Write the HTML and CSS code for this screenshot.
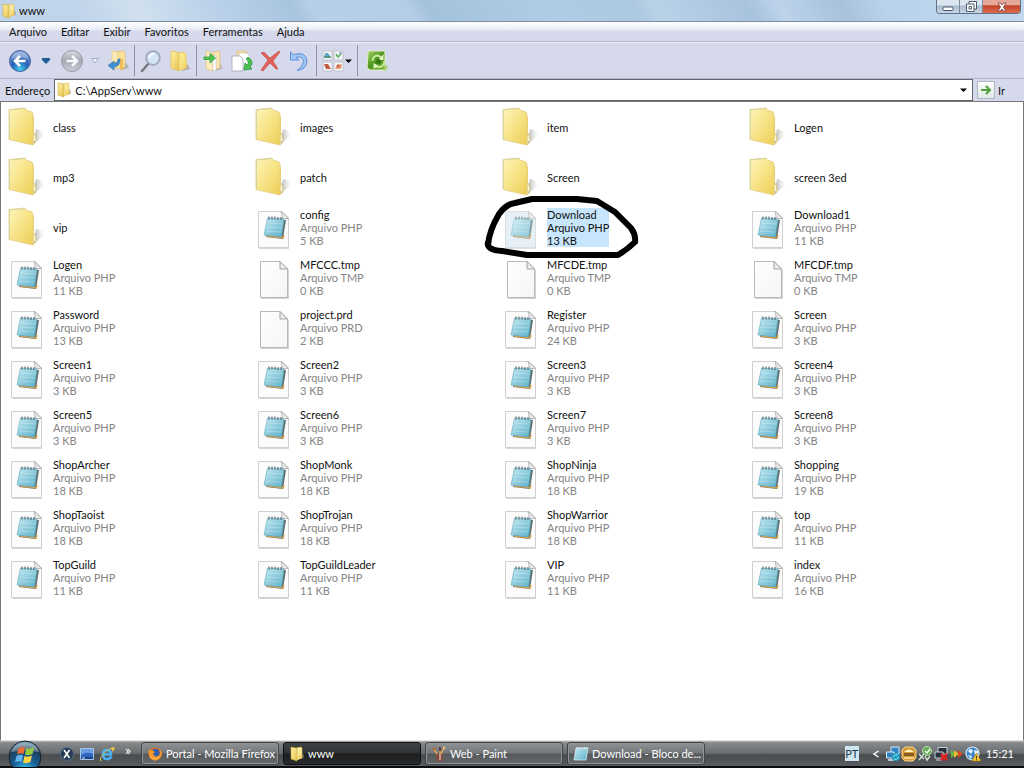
FILE: index.html
```html
<!DOCTYPE html>
<html lang="pt">
<head>
<meta charset="utf-8">
<title>www</title>
<link rel="stylesheet" href="styles.css">
</head>
<body>
<svg class="sprite" aria-hidden="true">
  <defs>
    <linearGradient id="gFolder" x1="0" y1="0" x2="1" y2="1"><stop offset="0" stop-color="#fdf5ba"/><stop offset=".5" stop-color="#f7e387"/><stop offset="1" stop-color="#edce55"/></linearGradient>
    <linearGradient id="gShade" x1="0" y1="0" x2="1" y2="0"><stop offset="0" stop-color="#a4a49e"/><stop offset="1" stop-color="#eee" stop-opacity=".2"/></linearGradient>
    <linearGradient id="gPad" x1="0" y1="0" x2="1" y2="1"><stop offset="0" stop-color="#c2e9f1"/><stop offset="1" stop-color="#5cb0c9"/></linearGradient>
    <linearGradient id="gPage" x1="0" y1="0" x2="1" y2="1"><stop offset="0" stop-color="#fff"/><stop offset="1" stop-color="#f5f5f5"/></linearGradient>
    <linearGradient id="gSmall" x1="0" y1="0" x2="1" y2="1"><stop offset="0" stop-color="#fff4a8"/><stop offset="1" stop-color="#e6c04c"/></linearGradient>
    <radialGradient id="gBack" cx=".5" cy=".9" r=".9"><stop offset="0" stop-color="#4ad0f4"/><stop offset=".45" stop-color="#2560b4"/><stop offset="1" stop-color="#8fa9dc"/></radialGradient>
    <linearGradient id="gFwd" x1="0" y1="0" x2="0" y2="1"><stop offset="0" stop-color="#d8dbe4"/><stop offset=".5" stop-color="#a4a8b2"/><stop offset="1" stop-color="#cdd0d8"/></linearGradient>
    <radialGradient id="gOrb" cx=".5" cy=".95" r=".95"><stop offset="0" stop-color="#3fd7ff"/><stop offset=".4" stop-color="#17639a"/><stop offset=".75" stop-color="#1d3f5c"/><stop offset="1" stop-color="#8fb0c4"/></radialGradient>
    <linearGradient id="gGreen" x1="0" y1="0" x2="1" y2="1"><stop offset="0" stop-color="#a8d46a"/><stop offset=".5" stop-color="#4b941c"/><stop offset="1" stop-color="#7dbb3c"/></linearGradient>
  </defs>

  <symbol id="folder" viewBox="0 0 40 44">
    <path d="M25 39 L36 31 Q35 25 28 24Z" fill="url(#gShade)"/>
    <path d="M24 10 26 12V38L24 40Z" fill="#ecd069"/>
    <path d="M26 28Q28 31 28 37L25 40V30Z" fill="#fdf6d8" stroke="#dcbd5c" stroke-width=".7"/>
    <path d="M1 4.500 17 3 18 5 24 7 25 9V40L1 34.500Z" fill="url(#gFolder)" stroke="#e3cd80" stroke-width=".8"/>
    <path d="M1.500 34V5L17 3.500" fill="none" stroke="#cbd4a4" stroke-width=".8"/>
    <circle cx="26.500" cy="37" r=".8" fill="#7f9fa8"/>
  </symbol>

  <symbol id="php" viewBox="0 -2 40 44">
    <path d="M4 5H28L34 11V42H4Z" fill="#bdbdbd" opacity=".6"/>
    <path class="sheet" d="M3.500 4.500H27L33.500 11V40.500H3.500Z" stroke="#d0d0d0"/>
    <path d="M26 4 33.500 11.500H27.500Z" fill="#e9e9e9" stroke="#a9a9a9" stroke-width=".8"/>
    <path d="M14 12 31 13 28 32 11 30Z" fill="#5f6e70"/>
    <path d="M12 29 28 31 29 28" fill="none" stroke="#dba04a" stroke-width="1.500"/>
    <path d="M12.500 11 29 12 26.500 30 9 28Z" fill="url(#gPad)" stroke="#5fa9bd" stroke-width=".6"/>
    <path d="M12 16 28 17M11 20 27 21M11 24 26 25" stroke="#fff" stroke-width=".5" opacity=".5"/>
    <path d="M14 9.500V12.500M17 9.500V12.500M20 9.500V12.500M23 10V13M26 10V13" stroke="#47565c" stroke-width="1"/>
  </symbol>

  <symbol id="blank" viewBox="0 -2 40 44">
    <path d="M6 6H26L34 13V42H6Z" fill="#aaa" opacity=".5"/>
    <path d="M5.500 4.500H25L32.500 12V40.500H5.500Z" fill="url(#gPage)" stroke="#b9b9b9"/>
    <path d="M25 4.500V12H32.500Z" fill="#eee" stroke="#9c9c9c" stroke-width=".9"/>
  </symbol>

  <symbol id="small-folder" viewBox="0 0 16 16">
    <path d="M8 14 15 12V9L11 4Z" fill="#9b9780" opacity=".5"/>
    <path d="M7 2 12 1 13 2V12L7 14Z" fill="#f9eb9b" stroke="#d3b14c" stroke-width=".6"/>
    <path d="M2 1 7 2 8 4V15L2 13Z" fill="url(#gSmall)" stroke="#cba63c" stroke-width=".6"/>
    <path d="M10 6 13 8V12L8 14Z" fill="url(#gSmall)"/>
  </symbol>

  <symbol id="i-back" viewBox="0 0 24 24">
    <circle cx="12" cy="12" r="10.500" fill="url(#gBack)" stroke="#4866a4"/>
    <path d="M3.500 10Q5 3 12 3T20.500 10Q12 7 3.500 10Z" fill="#fff" opacity=".3"/>
    <path d="M17.500 12H8M12 7 7 12 12 17" fill="none" stroke="#fff" stroke-width="2.600"/>
  </symbol>
  <symbol id="i-forward" viewBox="0 0 24 24">
    <circle cx="12" cy="12" r="10.500" fill="url(#gFwd)" stroke="#9699a4"/>
    <path d="M6.500 12H16M12 7 17 12 12 17" fill="none" stroke="#f6f7fa" stroke-width="2.600"/>
  </symbol>
  <symbol id="i-up" viewBox="0 0 24 24">
    <path d="M14 21 23 19 18 11Z" fill="#8f8c7d" opacity=".5"/>
    <path d="M9 3 17 2 19 4V18L9 20Z" fill="#fbdf9a" stroke="#e4bd6a" stroke-width=".7"/>
    <path d="M6 2 11 3 12 5V13H6Z" fill="#fceab5" stroke="#e6c676" stroke-width=".6"/>
    <path d="M14 9 17 10V22L14 20Z" fill="#f1bd58"/>
    <path d="M12 10Q12 14 8 14.500V12L2 16.500 8 21V18Q14.500 17.500 14 10Z" fill="#3f8fd4" stroke="#2a6ba9" stroke-width=".5"/>
  </symbol>
  <symbol id="i-search" viewBox="0 0 24 24">
    <path d="M9.500 14.500 3 22" stroke="#77767c" stroke-width="2.400" stroke-linecap="round"/>
    <circle cx="14" cy="9" r="6.800" fill="#d2e6f7" stroke="#a0a9ba" stroke-width="1.800"/>
    <path d="M10 9Q11 5 15 5" fill="none" stroke="#fff" stroke-width="1.500"/>
  </symbol>
  <symbol id="i-folders" viewBox="0 0 24 24">
    <path d="M13 22 22 20 17 11Z" fill="#8f8c7d" opacity=".6"/>
    <path d="M10 4 16 3 18 5V18L10 21Z" fill="#fae488" stroke="#e0bc4f" stroke-width=".7"/>
    <path d="M3 2 9 3 11 6V22L3 19Z" fill="url(#gSmall)" stroke="#e0bc4f" stroke-width=".7"/>
    <path d="M14 9 19 11V19L12 22Z" fill="url(#gSmall)"/>
  </symbol>
  <symbol id="i-move" viewBox="0 0 24 24">
    <path d="M14 22 22 20 18 12Z" fill="#8f8c7d" opacity=".4"/>
    <path d="M12 3 18 2 19 4V19L12 21Z" fill="#f9e3b0" stroke="#d9b976" stroke-width=".7"/>
    <path d="M5 2 10 3 12 5V22L5 20Z" fill="#fbedbf" stroke="#dfc07b" stroke-width=".7"/>
    <path d="M12 7 15 6V21L12 22Z" fill="#fff" stroke="#bbb" stroke-width=".5"/>
    <path d="M3 8H9V4.500L14.500 9 9 14V10.500H3Z" fill="#50c850" stroke="#259437" stroke-width=".7"/>
  </symbol>
  <symbol id="i-copy" viewBox="0 0 24 24">
    <path d="M7 2 16 2 18 5V18H7Z" fill="#fbe7ac" stroke="#dbbb70" stroke-width=".7"/>
    <path d="M9 4H17L20 7V18H9Z" fill="#fff" stroke="#b8b8bc" stroke-width=".7"/>
    <path d="M2 7H10L13 10V22H2Z" fill="#fff" stroke="#a2a4ad" stroke-width=".8"/>
    <path d="M18 8Q25 13 20 18L22 20 14 21 15 14 17 16Q20 13 16 10Z" fill="#4abf50" stroke="#248f38" stroke-width=".7"/>
  </symbol>
  <symbol id="i-delete" viewBox="0 0 24 24">
    <path d="M2 4 5 3 11 9 20 2 21 3 14 12 19 20 17 20 11 14 4 22 2 21 9 11Z" fill="#e0625a" stroke="#c24440" stroke-width=".6"/>
  </symbol>
  <symbol id="i-undo" viewBox="0 0 24 24">
    <path d="M2.500 3V11H11L8 8.500Q15 6.500 15.500 12.500 15 18 9 21.500 18 21 19 12 18 2 5.500 5.500Z" fill="#a3c6f5" stroke="#5c8edb" stroke-width="1"/>
  </symbol>
  <symbol id="i-views" viewBox="0 0 24 24">
    <path d="M2 2H11V11H2ZM13 2H22V11H13ZM2 13H11V22H2ZM13 13H22V22H13Z" fill="#f5f6f9" stroke="#b7bac4" stroke-width=".8"/>
    <path d="M4 4H7L9 7V9H3Z" fill="#5fa8cc"/><path d="M3 8H10" stroke="#42884a" stroke-width="1.200"/>
    <path d="M15 5 17 8 20 5" fill="none" stroke="#5fae64" stroke-width="1.600"/><path d="M18 4H21" stroke="#4a7fb8"/>
    <path d="M3 15H7L10 20H5Z" fill="#c35a42"/><path d="M14 20Q17 13 21 16L20 20Z" fill="#e6a07a"/><circle cx="17" cy="17" r="1.500" fill="#c96445"/>
  </symbol>
  <symbol id="i-sync" viewBox="0 0 24 24">
    <path d="M3 2H20V16L21 21H5L2 19Z" fill="url(#gGreen)" stroke="#dcebc4" stroke-width="1.200"/>
    <path d="M7.500 12Q8 6.500 13 6.500L17 9M19.500 12Q19 17 15 18L10 17.500" fill="none" stroke="#c8e89d" stroke-width="2"/>
    <path d="M18.500 5V11H13ZM8.500 20V14L13 16.500Z" fill="#e2f4c6"/>
    <circle cx="13.500" cy="12.500" r="2.500" fill="#347713"/>
    <path d="M18 16 23 17 20 23Z" fill="#a7d16b"/>
  </symbol>

  <symbol id="caret" viewBox="0 0 8 8"><path d="M0 2.500H7L3.500 6Z" fill="currentColor"/></symbol>
  <symbol id="caret-deep" viewBox="0 0 10 8"><path d="M1 1H9V3L5 7 1 3Z" fill="currentColor"/></symbol>
  <symbol id="caret-open" viewBox="0 0 10 8"><path d="M1.500 1.500H8.500L5 6Z" fill="#eef1f9" stroke="#a0acd0"/></symbol>
  <symbol id="go" viewBox="0 0 16 16">
    <path d="M3 8H12M8 4 12 8 8 12" fill="none" stroke="#4aa23a" stroke-width="2"/>
  </symbol>

  <symbol id="orb" viewBox="0 0 34 34">
    <circle cx="17" cy="17" r="16" fill="url(#gOrb)" stroke="#17242c"/>
    <path d="M3 12Q6 3 17 3T31 12Q17 9 3 12Z" fill="#fff" opacity=".3"/>
    <path d="M10.500 8.500Q13.500 6 17 7.500L15.500 14Q12.500 12.500 9 14.500Z" fill="#ef6b32"/>
    <path d="M18.500 8Q22 9.500 26 7.500L24.500 14Q20.500 16 17 14.500Z" fill="#93cb3d"/>
    <path d="M8.500 16Q12 14 15 15.500L13.500 22Q10.500 20.500 7 22.500Z" fill="#64b4f0"/>
    <path d="M16.500 16Q20.500 17.500 24 15.500L22.500 22Q18.500 24 15 22.500Z" fill="#fdd245"/>
  </symbol>
  <symbol id="ql-x" viewBox="0 0 16 16">
    <circle cx="8" cy="8" r="6.500" fill="#263a54" stroke="#536d8b"/>
    <path d="M5 4 10.500 12M10.500 4 5 12" stroke="#fff" stroke-width="1.600"/>
  </symbol>
  <symbol id="ql-desk" viewBox="0 0 16 16">
    <path d="M1.500 2.500H14.500V13.500H1.500Z" fill="#2f65be" stroke="#a7c4eb"/>
    <path d="M2 9Q8 5 14 8V3H2Z" fill="#6a9ce0"/><path d="M2 12H14" stroke="#1c4283" stroke-width="2"/><path d="M3 12H6" stroke="#d1e4ff"/>
  </symbol>
  <symbol id="ql-ie" viewBox="0 0 16 16">
    <path d="M12.500 10.500Q11 13 8 13 4 13 4 8.500 4 4 8 4 12 4 12 8.500H5" fill="none" stroke="#4cb2ee" stroke-width="2.500"/>
    <path d="M1 15Q0 12 5 7T15 1Q17 3 13 6 14 3 12 3 8 4 4 9T3 14Z" fill="#f3c744"/>
  </symbol>
  <symbol id="firefox" viewBox="0 0 16 16">
    <circle cx="8" cy="8" r="6.500" fill="#e36b1d"/><circle cx="8.500" cy="7" r="4.200" fill="#2f5fb0"/>
    <path d="M1.500 3Q3 5 5 4L8 6 6 8Q8 12 12 9.500 14 7 12 3 16 6 14.500 10 12 15 7 14.500 1 13 1.500 3Z" fill="#f3952c"/>
    <path d="M3 10Q7 15 12 11" stroke="#fcd257" fill="none"/>
  </symbol>
  <symbol id="paint" viewBox="0 0 16 16">
    <path d="M5 8H12L11 15H6Z" fill="#8a4a3a"/><path d="M6 8 3 3M9 8V3M10 8 13 2" stroke="#dda056" stroke-width="1.500"/>
    <path d="M1 4 3 1 5 4Z" fill="#b46a2d"/><path d="M8 1H10V5H8Z" fill="#5d4040"/><path d="M12 0 15 2 12 4Z" fill="#eec36c"/><path d="M9 8V14" stroke="#eee"/>
  </symbol>
  <symbol id="notepad" viewBox="0 0 16 16">
    <path d="M3 2H15L13 14H1Z" fill="url(#gPad)" stroke="#e1f3f6" stroke-width=".7"/>
    <path d="M4 1V3M6.500 1V3M9 1V3M11.500 1V3M14 1V3" stroke="#dfe8ea"/>
  </symbol>
  <symbol id="t-sync" viewBox="0 0 16 16">
    <path d="M6 1H14V8H6Z" fill="#2f83c5" stroke="#d6ecff"/><path d="M1.500 6H9V12H1.500Z" fill="#317fbd" stroke="#d6ecff"/>
    <path d="M3 14H9" stroke="#d6ecff" stroke-width="1.500"/><circle cx="11" cy="11" r="4" fill="#1f99bd"/><path d="M8 11Q11 7 13 9M14 11Q11 15 9 13" stroke="#91eaf2" fill="none"/>
  </symbol>
  <symbol id="t-orange" viewBox="0 0 16 16">
    <path d="M4 1H12L15 4V12L12 15H4L1 12V4Z" fill="#d59b3b" stroke="#f3d587"/>
    <path d="M3 6Q8 1 13 6Z" fill="#fff1bc"/><path d="M3 7H13V10H3Z" fill="#8b5d26"/><path d="M3 12H13" stroke="#ffe49c" stroke-width="1.500"/>
  </symbol>
  <symbol id="t-green" viewBox="0 0 16 16">
    <circle cx="10" cy="5" r="4.500" fill="#68ae58" stroke="#b9dfae"/><path d="M8 5 10 7 13 3" fill="none" stroke="#fff" stroke-width="1.300"/>
    <path d="M2 8 7 13M7 8 2 14M8 10 10 14 13 10" stroke="#d2dfce" stroke-width="1.500" fill="none"/>
  </symbol>
  <symbol id="t-net" viewBox="0 0 16 16">
    <path d="M5 1.500H14V8H5Z" fill="#27303a" stroke="#cbd2d9"/><path d="M2 6H10V12H2Z" fill="#27303a" stroke="#cbd2d9"/><path d="M3 14H9" stroke="#ccc"/>
    <path d="M8 8 14 14M14 8 8 14" stroke="#e32222" stroke-width="2.500"/>
  </symbol>
  <symbol id="t-arrows" viewBox="0 0 16 16">
    <path d="M2 4 7 8 2 12Z" fill="#6bb73b"/><path d="M5 4 10 8 5 12Z" fill="#e8ba35"/><path d="M9 4 14 8 9 12Z" fill="#d84b29"/>
  </symbol>
  <symbol id="t-world" viewBox="0 0 16 16">
    <circle cx="7.500" cy="7.500" r="6.500" fill="#3c83c8" stroke="#d9edff" stroke-width="1.200"/>
    <path d="M3 5Q6 1 8 5L6 8ZM9 4 13 5V8L10 9ZM3 9 7 10 6 13Z" fill="#e8f4ff"/>
    <path d="M11.500 7 16 15H7Z" fill="#f9c62f" stroke="#a87512" stroke-width=".6"/><path d="M11.500 10V12.500M11.500 13.200V14.200" stroke="#432"/>
  </symbol>
</svg>

<div class="desktop">
  <header class="titlebar">
    <svg class="icon16"><use href="#small-folder"/></svg>
    <h1 class="title">www</h1>
    <div class="window-controls">
      <button class="wc" aria-label="Minimizar"><svg class="wc-icon" viewBox="0 0 12 12"><rect x="1" y="6" width="10" height="3.500" rx="1" fill="#fff" stroke="#4d5a6a"/></svg></button>
      <button class="wc" aria-label="Restaurar"><svg class="wc-icon" viewBox="0 0 12 12"><path d="M4 .5H11.500V8H9V10.500H1.500V3H4Z" fill="#fff" stroke="#4d5a6a"/><path d="M4 3H9V8M4 5.500H6.500V8H4Z" fill="none" stroke="#4d5a6a"/></svg></button>
      <button class="wc wc-close" aria-label="Fechar"><svg class="wc-icon" viewBox="0 0 12 12"><path d="M2 2H4.500L6 4 7.500 2H10L7.500 6 10 10H7.500L6 8 4.500 10H2L4.500 6Z" fill="#fff" stroke="#7b3a36" stroke-width=".8"/></svg></button>
    </div>
  </header>

  <nav class="menubar">
    <button>Arquivo</button><button>Editar</button><button>Exibir</button><button>Favoritos</button><button>Ferramentas</button><button>Ajuda</button>
  </nav>

  <div class="toolbar">
    <div class="tools tools-nav">
      <button aria-label="Voltar"><svg class="icon24"><use href="#i-back"/></svg></button>
      <button class="drop drop-blue" aria-label="Histórico"><svg class="caret-wide"><use href="#caret-deep"/></svg></button>
      <button aria-label="Avançar"><svg class="icon24"><use href="#i-forward"/></svg></button>
      <button class="drop" aria-label="Páginas seguintes"><svg class="caret-wide"><use href="#caret-open"/></svg></button>
      <button aria-label="Acima"><svg class="icon24"><use href="#i-up"/></svg></button>
    </div>
    <div class="tools">
      <button aria-label="Pesquisar"><svg class="icon24"><use href="#i-search"/></svg></button>
      <button aria-label="Pastas"><svg class="icon24"><use href="#i-folders"/></svg></button>
    </div>
    <div class="tools">
      <button aria-label="Mover para"><svg class="icon24"><use href="#i-move"/></svg></button>
      <button aria-label="Copiar para"><svg class="icon24"><use href="#i-copy"/></svg></button>
      <button aria-label="Excluir"><svg class="icon24"><use href="#i-delete"/></svg></button>
      <button aria-label="Desfazer"><svg class="icon24"><use href="#i-undo"/></svg></button>
    </div>
    <div class="tools">
      <button class="views" aria-label="Modos de exibição"><svg class="icon24"><use href="#i-views"/></svg><svg class="icon8"><use href="#caret"/></svg></button>
    </div>
    <div class="tools tools-last">
      <button aria-label="Sincronizar"><svg class="icon24"><use href="#i-sync"/></svg></button>
    </div>
  </div>

  <form class="addressbar">
    <label for="address">Endereço</label>
    <div class="address-box">
      <svg class="icon16"><use href="#small-folder"/></svg>
      <input id="address" type="text" value="C:\AppServ\www">
      <button type="button" class="address-drop" aria-label="Endereços anteriores"><svg class="icon8"><use href="#caret"/></svg></button>
    </div>
    <button type="button" class="go"><span class="go-box"><svg class="icon16"><use href="#go"/></svg></span>Ir</button>
  </form>

  <main class="content">
    <ul class="files">
      <li class="file"><svg class="file-icon"><use href="#folder"/></svg><div class="info"><div>class</div></div></li>
      <li class="file"><svg class="file-icon"><use href="#folder"/></svg><div class="info"><div>images</div></div></li>
      <li class="file"><svg class="file-icon"><use href="#folder"/></svg><div class="info"><div>item</div></div></li>
      <li class="file"><svg class="file-icon"><use href="#folder"/></svg><div class="info"><div>Logen</div></div></li>

      <li class="file"><svg class="file-icon"><use href="#folder"/></svg><div class="info"><div>mp3</div></div></li>
      <li class="file"><svg class="file-icon"><use href="#folder"/></svg><div class="info"><div>patch</div></div></li>
      <li class="file"><svg class="file-icon"><use href="#folder"/></svg><div class="info"><div>Screen</div></div></li>
      <li class="file"><svg class="file-icon"><use href="#folder"/></svg><div class="info"><div>screen 3ed</div></div></li>

      <li class="file"><svg class="file-icon"><use href="#folder"/></svg><div class="info"><div>vip</div></div></li>
      <li class="file"><svg class="file-icon"><use href="#php"/></svg><div class="info"><div>config</div><div class="meta">Arquivo PHP</div><div class="meta">5 KB</div></div></li>
      <li class="file selected"><svg class="file-icon"><use href="#php"/></svg><div class="info"><div>Download</div><div class="meta">Arquivo PHP</div><div class="meta">13 KB</div></div>
        <svg class="scribble" viewBox="0 0 160 72"><path d="M6 52Q7 38 17 21 24 11 33 10L50 6H95L115 8 133 19 149 35Q154 42 153 49 146 56 136 62H45L20 58Q4 57 6 49" fill="none" stroke="#000" stroke-width="6" stroke-linecap="round" stroke-linejoin="round"/></svg></li>
      <li class="file"><svg class="file-icon"><use href="#php"/></svg><div class="info"><div>Download1</div><div class="meta">Arquivo PHP</div><div class="meta">11 KB</div></div></li>

      <li class="file"><svg class="file-icon"><use href="#php"/></svg><div class="info"><div>Logen</div><div class="meta">Arquivo PHP</div><div class="meta">11 KB</div></div></li>
      <li class="file"><svg class="file-icon"><use href="#blank"/></svg><div class="info"><div>MFCCC.tmp</div><div class="meta">Arquivo TMP</div><div class="meta">0 KB</div></div></li>
      <li class="file"><svg class="file-icon"><use href="#blank"/></svg><div class="info"><div>MFCDE.tmp</div><div class="meta">Arquivo TMP</div><div class="meta">0 KB</div></div></li>
      <li class="file"><svg class="file-icon"><use href="#blank"/></svg><div class="info"><div>MFCDF.tmp</div><div class="meta">Arquivo TMP</div><div class="meta">0 KB</div></div></li>

      <li class="file"><svg class="file-icon"><use href="#php"/></svg><div class="info"><div>Password</div><div class="meta">Arquivo PHP</div><div class="meta">13 KB</div></div></li>
      <li class="file"><svg class="file-icon"><use href="#blank"/></svg><div class="info"><div>project.prd</div><div class="meta">Arquivo PRD</div><div class="meta">2 KB</div></div></li>
      <li class="file"><svg class="file-icon"><use href="#php"/></svg><div class="info"><div>Register</div><div class="meta">Arquivo PHP</div><div class="meta">24 KB</div></div></li>
      <li class="file"><svg class="file-icon"><use href="#php"/></svg><div class="info"><div>Screen</div><div class="meta">Arquivo PHP</div><div class="meta">3 KB</div></div></li>

      <li class="file"><svg class="file-icon"><use href="#php"/></svg><div class="info"><div>Screen1</div><div class="meta">Arquivo PHP</div><div class="meta">3 KB</div></div></li>
      <li class="file"><svg class="file-icon"><use href="#php"/></svg><div class="info"><div>Screen2</div><div class="meta">Arquivo PHP</div><div class="meta">3 KB</div></div></li>
      <li class="file"><svg class="file-icon"><use href="#php"/></svg><div class="info"><div>Screen3</div><div class="meta">Arquivo PHP</div><div class="meta">3 KB</div></div></li>
      <li class="file"><svg class="file-icon"><use href="#php"/></svg><div class="info"><div>Screen4</div><div class="meta">Arquivo PHP</div><div class="meta">3 KB</div></div></li>

      <li class="file"><svg class="file-icon"><use href="#php"/></svg><div class="info"><div>Screen5</div><div class="meta">Arquivo PHP</div><div class="meta">3 KB</div></div></li>
      <li class="file"><svg class="file-icon"><use href="#php"/></svg><div class="info"><div>Screen6</div><div class="meta">Arquivo PHP</div><div class="meta">3 KB</div></div></li>
      <li class="file"><svg class="file-icon"><use href="#php"/></svg><div class="info"><div>Screen7</div><div class="meta">Arquivo PHP</div><div class="meta">3 KB</div></div></li>
      <li class="file"><svg class="file-icon"><use href="#php"/></svg><div class="info"><div>Screen8</div><div class="meta">Arquivo PHP</div><div class="meta">3 KB</div></div></li>

      <li class="file"><svg class="file-icon"><use href="#php"/></svg><div class="info"><div>ShopArcher</div><div class="meta">Arquivo PHP</div><div class="meta">18 KB</div></div></li>
      <li class="file"><svg class="file-icon"><use href="#php"/></svg><div class="info"><div>ShopMonk</div><div class="meta">Arquivo PHP</div><div class="meta">18 KB</div></div></li>
      <li class="file"><svg class="file-icon"><use href="#php"/></svg><div class="info"><div>ShopNinja</div><div class="meta">Arquivo PHP</div><div class="meta">18 KB</div></div></li>
      <li class="file"><svg class="file-icon"><use href="#php"/></svg><div class="info"><div>Shopping</div><div class="meta">Arquivo PHP</div><div class="meta">19 KB</div></div></li>

      <li class="file"><svg class="file-icon"><use href="#php"/></svg><div class="info"><div>ShopTaoist</div><div class="meta">Arquivo PHP</div><div class="meta">18 KB</div></div></li>
      <li class="file"><svg class="file-icon"><use href="#php"/></svg><div class="info"><div>ShopTrojan</div><div class="meta">Arquivo PHP</div><div class="meta">18 KB</div></div></li>
      <li class="file"><svg class="file-icon"><use href="#php"/></svg><div class="info"><div>ShopWarrior</div><div class="meta">Arquivo PHP</div><div class="meta">18 KB</div></div></li>
      <li class="file"><svg class="file-icon"><use href="#php"/></svg><div class="info"><div>top</div><div class="meta">Arquivo PHP</div><div class="meta">11 KB</div></div></li>

      <li class="file"><svg class="file-icon"><use href="#php"/></svg><div class="info"><div>TopGuild</div><div class="meta">Arquivo PHP</div><div class="meta">11 KB</div></div></li>
      <li class="file"><svg class="file-icon"><use href="#php"/></svg><div class="info"><div>TopGuildLeader</div><div class="meta">Arquivo PHP</div><div class="meta">11 KB</div></div></li>
      <li class="file"><svg class="file-icon"><use href="#php"/></svg><div class="info"><div>VIP</div><div class="meta">Arquivo PHP</div><div class="meta">11 KB</div></div></li>
      <li class="file"><svg class="file-icon"><use href="#php"/></svg><div class="info"><div>index</div><div class="meta">Arquivo PHP</div><div class="meta">16 KB</div></div></li>
    </ul>
  </main>

  <footer class="taskbar">
    <button class="start" aria-label="Iniciar"><svg class="orb"><use href="#orb"/></svg></button>
    <div class="quick">
      <button aria-label="Alternar janelas"><svg class="icon16"><use href="#ql-x"/></svg></button>
      <button aria-label="Área de trabalho"><svg class="icon16"><use href="#ql-desk"/></svg></button>
      <button aria-label="Internet Explorer"><svg class="icon16"><use href="#ql-ie"/></svg></button>
      <button class="more">»</button>
    </div>
    <div class="tasks">
      <button class="task"><svg class="icon16"><use href="#firefox"/></svg><span>Portal - Mozilla Firefox</span></button>
      <button class="task active"><svg class="icon16"><use href="#small-folder"/></svg><span>www</span></button>
      <button class="task"><svg class="icon16"><use href="#paint"/></svg><span>Web - Paint</span></button>
      <button class="task"><svg class="icon16"><use href="#notepad"/></svg><span>Download - Bloco de...</span></button>
    </div>
    <div class="tray">
      <button class="lang">PT</button>
      <button class="tray-more" aria-label="Mostrar ícones"><svg class="icon8" viewBox="0 0 8 8"><path d="M6.500 1 2 4 6.500 7" fill="none" stroke="#fff" stroke-width="1.500"/></svg></button>
      <div class="tray-icons">
        <svg class="icon16"><use href="#t-sync"/></svg><svg class="icon16"><use href="#t-orange"/></svg><svg class="icon16"><use href="#t-green"/></svg><svg class="icon16"><use href="#t-net"/></svg><svg class="icon16"><use href="#t-arrows"/></svg><svg class="icon16"><use href="#t-world"/></svg>
      </div>
      <time>15:21</time>
    </div>
  </footer>
</div>
</body>
</html>
```
FILE: styles.css
```css
* { box-sizing: border-box; }

body {
  margin: 0;
  font: 11px/13px Lato, "Open Sans", sans-serif;
  color: #111;
}

button, input {
  margin: 0;
  padding: 0;
  border: 0;
  background: none;
  font: inherit;
  color: inherit;
}

svg { display: block; flex: none; }
.sprite { position: absolute; width: 0; height: 0; }
.icon8 { width: 8px; height: 8px; }
.icon16 { width: 16px; height: 16px; }
.icon24 { width: 24px; height: 24px; }

.desktop {
  display: flex;
  flex-direction: column;
  min-height: 100vh;
  background: #d5d9eb;
}

.titlebar {
  display: flex;
  align-items: center;
  gap: 2px;
  height: 22px;
  padding-left: 1px;
  border-bottom: 1px solid #7c8da3;
  background: linear-gradient(60deg, #c0d4ea 0 8%, #d0e0ef 14%, #b9d0e9 22%, #a9c5df 29%, #b8cfe8 31%, #b5cee8 40%, #a5c2dc 42%, #b0cce6 54%, #acc9e0 62%, #b9d2e8 64%, #a8c3de 73%, #bcd3ea 76%, #a8c2dc 82%, #b9d2ea 86%, #c3d9ee);
}
.title { flex: 1; margin: 0; font-size: 11px; font-weight: 400; }

.window-controls {
  display: flex;
  align-self: flex-start;
  height: 14px;
  margin-right: 3px;
  border: 1px solid #60728a;
  border-top: 0;
  border-radius: 0 0 4px 4px;
  overflow: hidden;
}
.wc {
  display: grid;
  place-items: center;
  width: 23px;
  border-right: 1px solid #7889a0;
  background: linear-gradient(#dbe5f0 0 40%, #a9bbcf 45%, #c6d6e6);
}
.wc-close {
  width: 37px;
  border-right: 0;
  background: linear-gradient(#e6a898 0 35%, #c4442c 45%, #dd6e50);
}
.wc-icon { width: 12px; height: 12px; }

.menubar {
  display: flex;
  gap: 14px;
  height: 20px;
  padding-left: 9px;
  border-bottom: 1px solid #b3bad0;
  background: linear-gradient(#fff, #e8ebf5 8px, #d5d9eb 9px);
}

.toolbar {
  display: flex;
  align-items: center;
  height: 37px;
  padding-left: 8px;
  border-top: 1px solid #eef0f8;
  border-bottom: 1px solid #b0b5c8;
}
.tools {
  display: flex;
  align-items: center;
  gap: 5px;
  height: 31px;
  padding: 0 4px;
  border-right: 1px solid #8c91a3;
}
.tools-nav { gap: 0; padding-left: 0; }
.tools-last { padding-left: 7px; border: 0; }
.drop { display: grid; place-items: center; width: 22px; color: #1e5a96; }
.drop-blue { width: 28px; }
.caret-wide { width: 10px; height: 8px; }
.views { display: flex; align-items: center; color: #000; }

.addressbar {
  display: flex;
  align-items: center;
  gap: 4px;
  height: 22px;
  padding-left: 5px;
}
.address-box {
  display: flex;
  flex: 1;
  align-items: center;
  gap: 3px;
  height: 22px;
  padding: 0 4px 0 1px;
  border: 1px solid #62656d;
  background: #fff;
}
.address-box input { flex: 1; min-width: 0; outline: 0; }
.address-drop { color: #000; }
.go { display: flex; align-items: center; gap: 3px; width: 47px; }
.go-box {
  border: 1px solid #b1b8c3;
  background: linear-gradient(#fff, #dfe8e5);
}

.content {
  flex: 1;
  padding: 0 0 1px 5px;
  border: 1px solid #777;
  border-bottom-color: #e4e4e4;
  background: #fff;
}
.files {
  display: grid;
  grid-template-columns: repeat(auto-fill, 247px);
  grid-auto-rows: 50px;
  margin: 0;
  padding: 0;
  list-style: none;
}
.file {
  position: relative;
  display: flex;
  align-items: center;
  gap: 5px;
  padding-left: 2px;
}
.file-icon { width: 40px; height: 44px; }
.sheet { fill: var(--sheet, #fcfcfc); }
.meta { color: #858585; }
.selected { --sheet: #dcecf5; }
.selected .info { background: #c7e6fb; }
.selected .meta { color: #111; }
.selected .file-icon { opacity: .7; }
.scribble {
  position: absolute;
  left: -18px;
  top: -9px;
  width: 160px;
  height: 72px;
}

.taskbar {
  display: flex;
  align-items: center;
  height: 27px;
  padding-left: 8px;
  border-bottom: 2px solid #0c0d0e;
  background: linear-gradient(#b4b6b8, #85888b 2px, #6a6e71 12px, #484c4f 14px, #5a5e62);
  color: #fff;
}
.start { height: 27px; overflow: hidden; }
.orb { width: 34px; height: 34px; }
.quick { display: flex; align-items: center; gap: 4px; width: 99px; padding-left: 17px; }
.more { width: 18px; padding-bottom: 8px; font-size: 14px; }
.tasks { display: flex; flex: 1; gap: 4px; min-width: 0; }
.task {
  display: flex;
  align-items: center;
  gap: 3px;
  width: 138px;
  height: 23px;
  padding-left: 5px;
  border: 1px solid #404447;
  border-radius: 3px;
  background: linear-gradient(#8f9295, #74787b 10px, #55595c 11px, #666a6d);
  box-shadow: inset 0 0 0 1px #909396;
  white-space: nowrap;
}
.active {
  border-color: #0f1011;
  background: linear-gradient(#404345, #303234 10px, #1c1e1f 11px, #292b2d);
  box-shadow: none;
}
.tray { display: flex; align-items: center; padding-right: 10px; }
.lang { width: 14px; height: 15px; background: #cfe5f2; color: #20364c; }
.tray-more { margin: 0 5px 0 13px; }
.tray-icons { display: flex; margin-right: 5px; }
```
